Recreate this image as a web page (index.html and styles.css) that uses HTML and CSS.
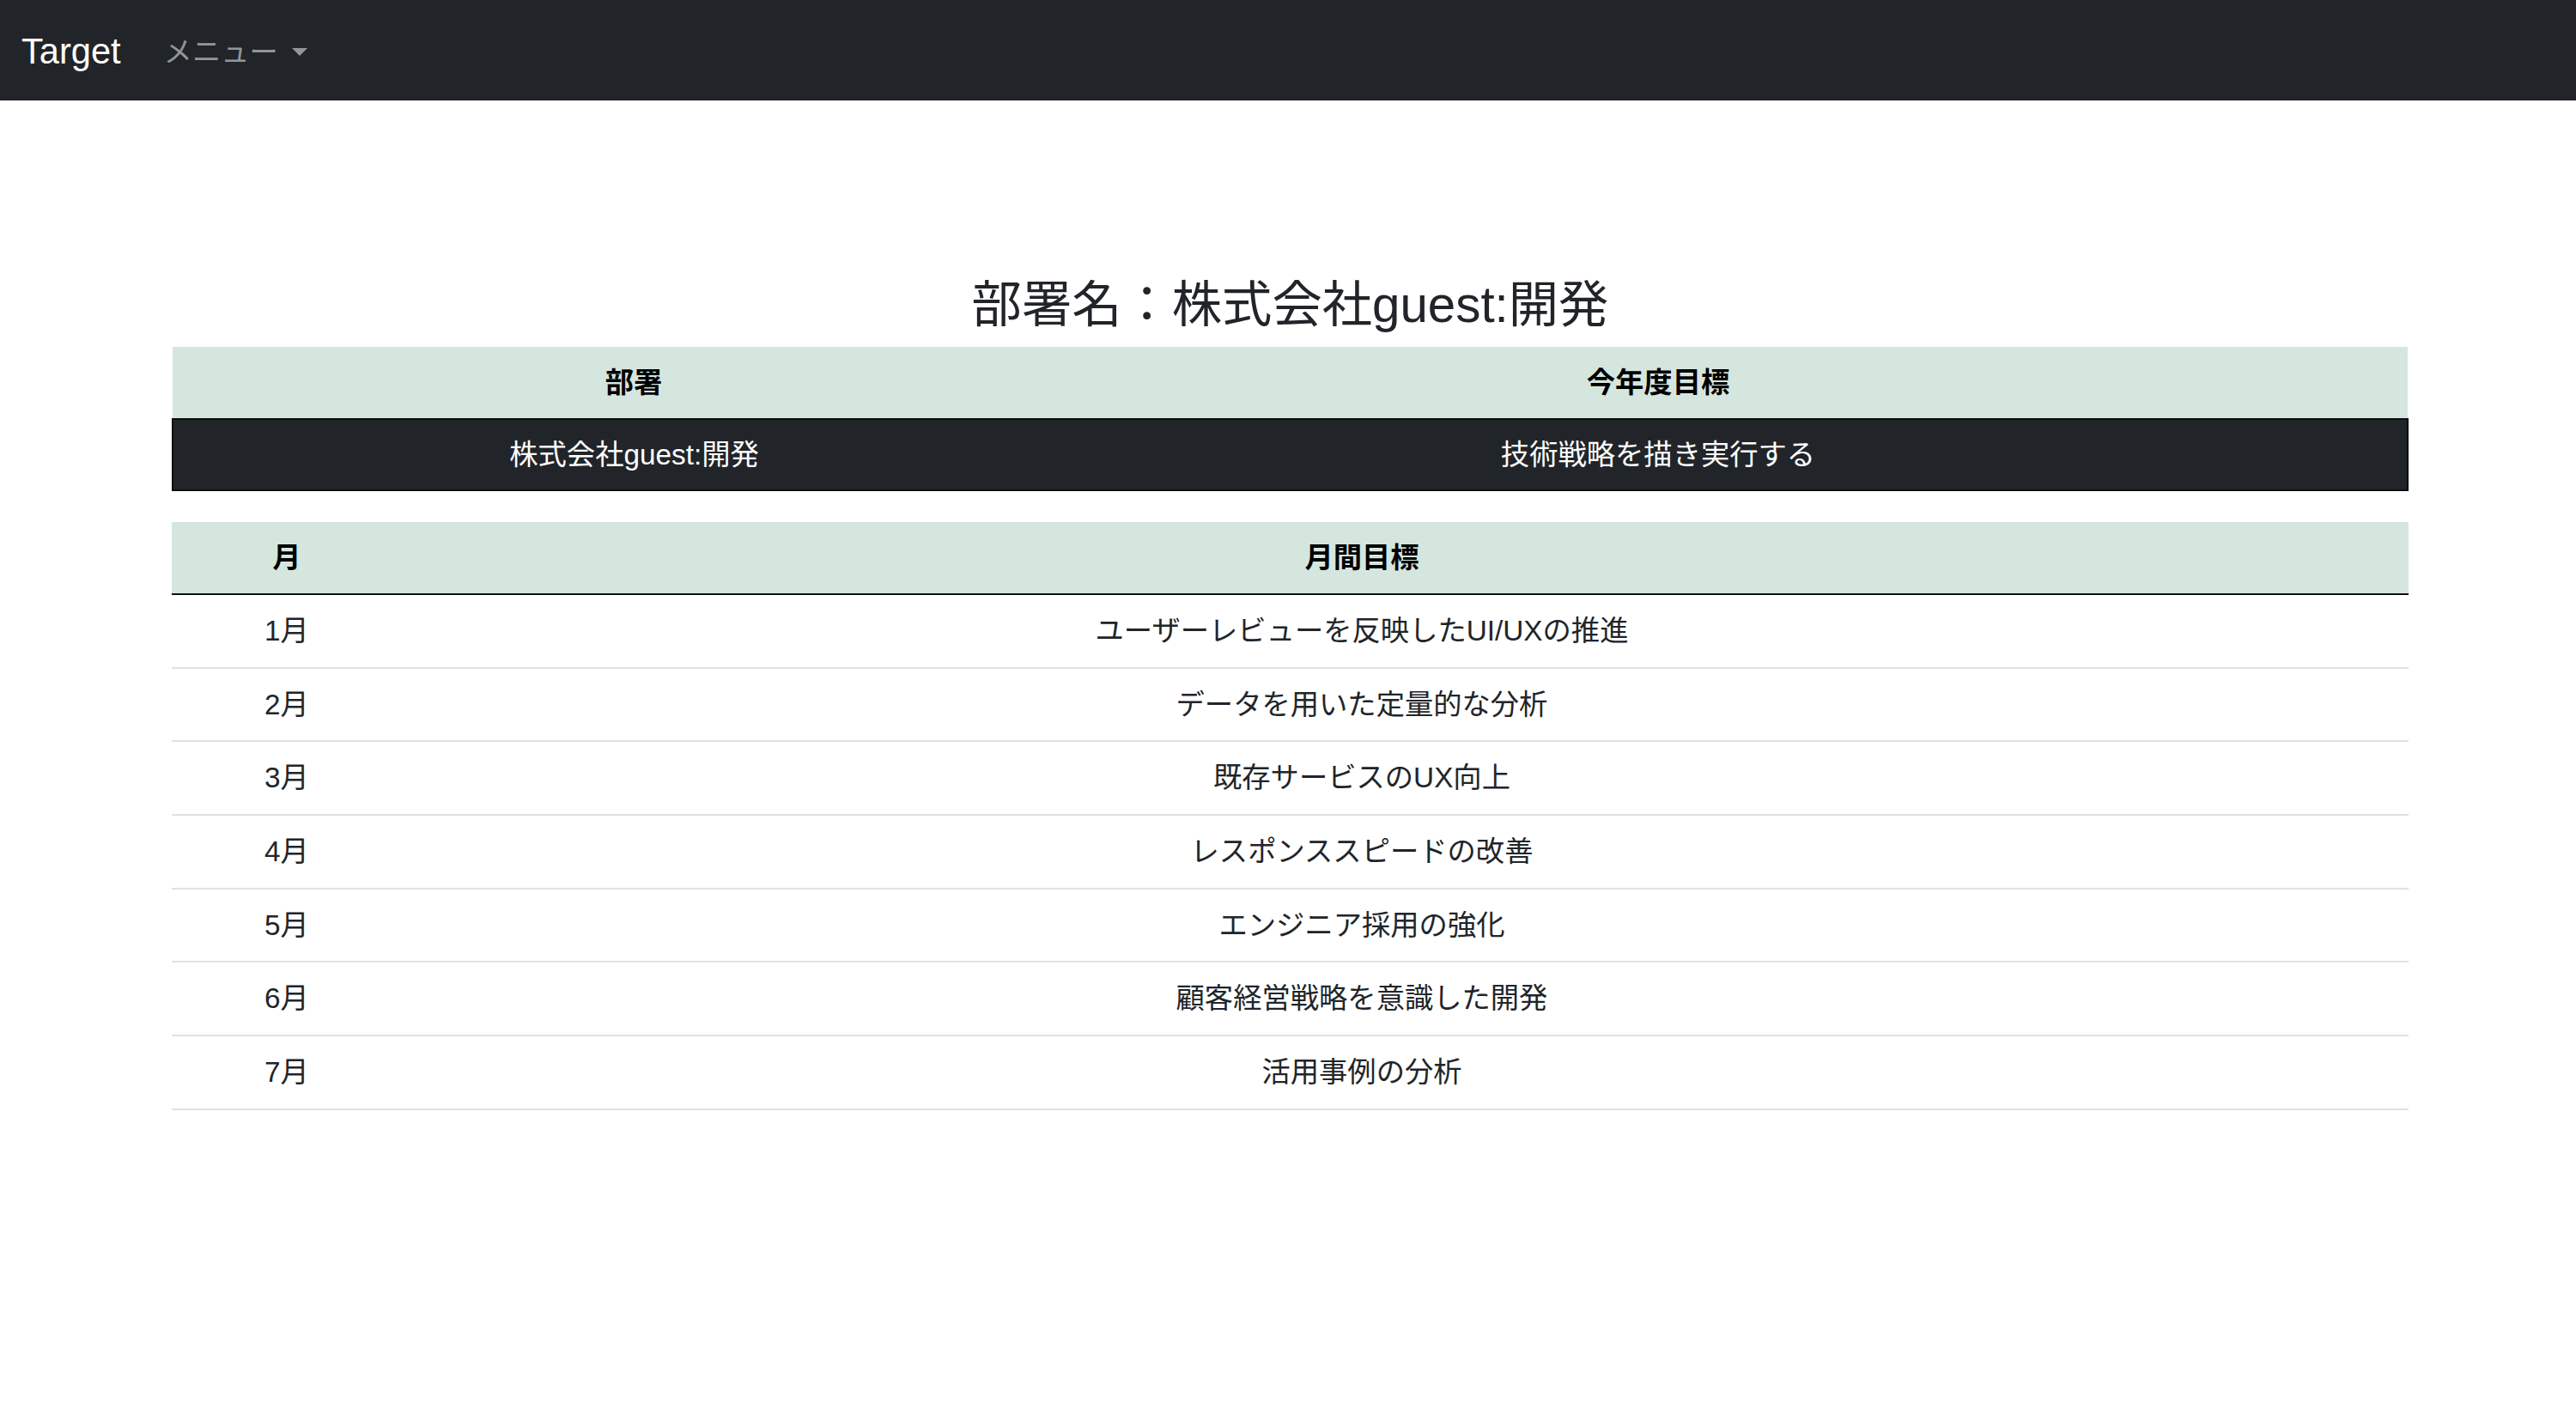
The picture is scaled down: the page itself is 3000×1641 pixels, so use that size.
FILE: index.html
```html
<!DOCTYPE html>
<html lang="ja">
<head>
<meta charset="utf-8">
<title>Target</title>
<link rel="stylesheet" href="styles.css">
</head>
<body>
<nav class="navbar">
  <span class="brand">Target</span>
  <span class="nav-link">メニュー<span class="caret"></span></span>
</nav>
<main class="main">
  <h3 class="title">部署名：株式会社guest:開発</h3>
  <table class="tbl tbl-dept">
    <colgroup><col class="c-dept"><col class="c-goal"><col></colgroup>
    <thead>
      <tr><th>部署</th><th>今年度目標</th><th></th></tr>
    </thead>
    <tbody>
      <tr class="row-dark"><td>株式会社guest:開発</td><td>技術戦略を描き実行する</td><td></td></tr>
    </tbody>
  </table>
  <table class="tbl tbl-month">
    <colgroup><col class="c-month"><col class="c-mgoal"><col></colgroup>
    <thead>
      <tr><th>月</th><th>月間目標</th><th></th></tr>
    </thead>
    <tbody>
      <tr><td>1月</td><td>ユーザーレビューを反映したUI/UXの推進</td><td></td></tr>
      <tr><td>2月</td><td>データを用いた定量的な分析</td><td></td></tr>
      <tr><td>3月</td><td>既存サービスのUX向上</td><td></td></tr>
      <tr><td>4月</td><td>レスポンススピードの改善</td><td></td></tr>
      <tr><td>5月</td><td>エンジニア採用の強化</td><td></td></tr>
      <tr><td>6月</td><td>顧客経営戦略を意識した開発</td><td></td></tr>
      <tr><td>7月</td><td>活用事例の分析</td><td></td></tr>
    </tbody>
  </table>
</main>
</body>
</html>
```

FILE: styles.css
```css
* { box-sizing: border-box; }
html, body {
  margin: 0;
  padding: 0;
  background: #ffffff;
  color: #212529;
  font-family: "Liberation Sans", "Noto Sans CJK JP", sans-serif;
  font-size: 33.3px;
  line-height: 1.5;
}
.navbar {
  height: 117px;
  background: #212529;
  display: flex;
  align-items: center;
  padding: 0 25px;
}
.brand {
  color: #ffffff;
  font-size: 41.6px;
  line-height: 1.5;
  margin-right: 33px;
  position: relative;
  top: 2px;
}
.nav-link {
  color: #949597;
  font-size: 33.3px;
  padding: 0 17px;
  display: flex;
  align-items: center;
  position: relative;
  top: 2px;
}
.caret {
  display: inline-block;
  width: 0;
  height: 0;
  margin-left: 16px;
  border-top: 9px solid #949597;
  border-left: 9px solid transparent;
  border-right: 9px solid transparent;
}
.main {
  padding: 0 195px 0 200px;
}
.title {
  margin: 203px 0 14px;
  font-size: 58.3px;
  font-weight: 400;
  line-height: 70px;
  text-align: center;
  color: #212529;
}
.tbl {
  width: 100%;
  border-collapse: collapse;
  table-layout: fixed;
  margin-bottom: 36px;
}
.tbl th, .tbl td {
  text-align: center;
  line-height: 50px;
  padding: 17px 8px 16.7px;
  white-space: nowrap;
}
.tbl th {
  background: #d5e6df;
  font-weight: 700;
  color: #000;
  padding-bottom: 15.7px;
  border-bottom: 2px solid #111;
}
.c-dept { width: 1074px; }
.c-goal { width: 1312px; }
.c-month { width: 268px; }
.c-mgoal { width: 2236px; }
.tbl-dept th { padding-bottom: 16.2px; border-bottom: 0; }
.row-dark td {
  background: #212529;
  color: #ffffff;
  padding: 16px 8px 15px;
  border-top: 2px solid #0d0e0f;
  border-bottom: 2px solid #0d0e0f;
}
.row-dark td:first-child { border-left: 2px solid #0d0e0f; }
.row-dark td:last-child { border-right: 2px solid #0d0e0f; }
.tbl-month td {
  color: #212529;
  border-bottom: 2px solid #dee2e6;
}
```
